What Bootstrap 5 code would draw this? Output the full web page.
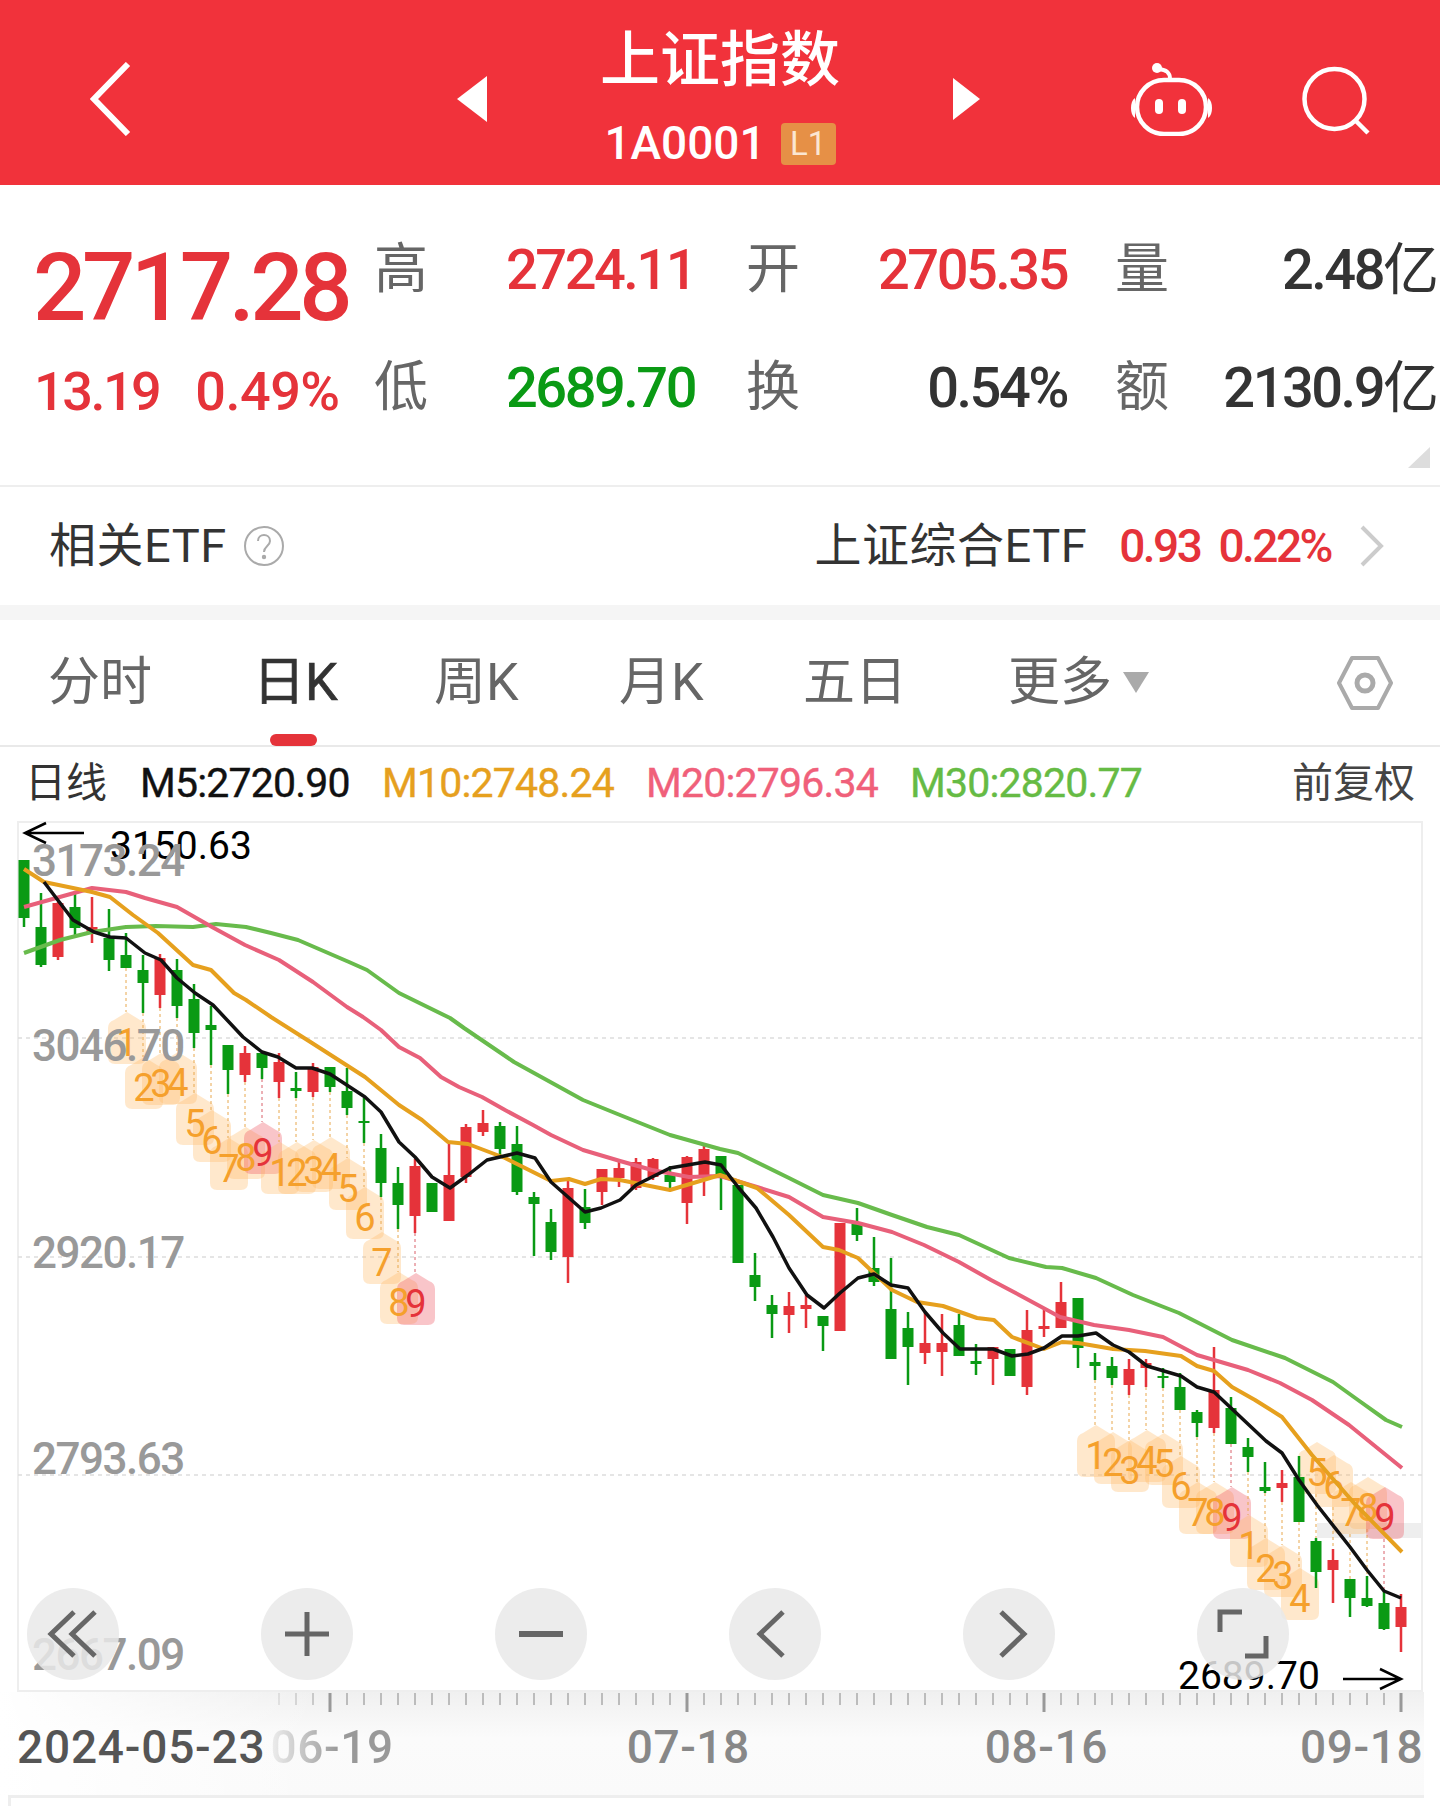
<!DOCTYPE html>
<html lang="zh-CN">
<head>
  <meta charset="UTF-8" />
  <title>上证指数</title>
  <meta name="viewport" content="width=device-width, initial-scale=1.0" />
  <link rel="stylesheet" href="https://cdn.jsdelivr.net/npm/bootstrap@5.3.0/dist/css/bootstrap.min.css" />
  <style>
    body {
      width: 1440px;
      height: 1806px;
      overflow: hidden;
      background: #fff;
      font-family: Roboto, "Noto Sans CJK SC", sans-serif;
    }

    /* top bar */
    .top-bar {
      height: 185px;
      padding: 12px 0 0 90px;
      background: #f1323b;
      color: #fff;
    }
    .top-center { width: 466px; }
    .top-title { font-size: 60px; line-height: 60px; font-weight: 500; }
    .top-code { margin-top: 30px; font-size: 46px; line-height: 45px; font-weight: 500; }
    .level-tag {
      width: 55px;
      height: 42px;
      margin-left: 15px;
      border-radius: 4px;
      background: #e69046;
      color: #fbe6d2;
      font-size: 33px;
      font-weight: 400;
      line-height: 42px;
      text-align: center;
    }

    /* quote block */
    .quote-grid {
      display: grid;
      grid-template-columns: 374px 54px 268px 50px 54px 267px 48px 56px 268px;
      grid-template-rows: 80px 80px;
      row-gap: 38px;
      align-items: center;
      height: 302px;
      padding-top: 45px;
      border-bottom: 2px solid #eee;
    }
    .quote-price {
      padding-left: 33px;
      margin-top: 36px;
      color: #e5333a;
      font-size: 94px;
      line-height: 80px;
      font-weight: 500;
      letter-spacing: -4.5px;
    }
    .quote-change {
      display: flex;
      padding-left: 34px;
      margin-top: 6px;
      color: #e5333a;
      font-size: 54px;
      font-weight: 500;
      letter-spacing: -2.5px;
    }
    .quote-change span + span { margin-left: 36px; letter-spacing: -.5px; }
    .quote-label { color: #666; font-size: 54px; line-height: 60px; }
    .quote-value { font-size: 56px; line-height: 60px; font-weight: 500; letter-spacing: -2.5px; white-space: nowrap; }
    .val-indent { padding-left: 78px; }
    .val-red { color: #e5333a; }
    .val-green { color: #0a9a14; }
    .val-dark { color: #333; }
    .val-unit { letter-spacing: 0; font-weight: 400; }
    .corner-mark {
      right: 10px;
      bottom: 17px;
      width: 22px;
      height: 21px;
      background: #ddd;
      clip-path: polygon(100% 0, 100% 100%, 0 100%);
    }

    /* etf row */
    .etf-row { height: 133px; padding: 0 56px 0 49px; border-bottom: 15px solid #f5f5f5; }
    .etf-name { color: #333; font-size: 47px; letter-spacing: .5px; }
    .etf-num { color: #e5333a; font-size: 46px; font-weight: 500; letter-spacing: -2.5px; margin-left: 32px; }
    .etf-num + .etf-num { margin-left: 18px; }
    .etf-arrow { margin-left: 28px; }

    /* period tabs */
    .tab-row { height: 127px; padding: 0 47px 0 48px; border-bottom: 2px solid #e9e9e9; }
    .tab-cell { color: #666; font-size: 52px; line-height: 60px; white-space: nowrap; }
    .tab-on { color: #333; -webkit-text-stroke: .7px #333; }
    .tab-pill {
      left: 17px;
      bottom: -33px;
      width: 47px;
      height: 12px;
      border-radius: 6px;
      background: #e5333a;
    }
    .tab-caret {
      width: 26px;
      height: 21px;
      margin-left: 11px;
      background: #aaa;
      clip-path: polygon(0 0, 100% 0, 50% 100%);
    }

    /* moving average row */
    .ma-row { height: 74px; padding: 0 25px; font-size: 41px; letter-spacing: -.8px; white-space: nowrap; }
    .ma-label { width: 115px; color: #333; font-size: 41px; letter-spacing: 0; }
    .ma-cell { width: 242px; -webkit-text-stroke: .4px; }
    .ma5 { color: #111; }
    .ma10 { color: #e6a01e; width: 264px; }
    .ma20 { color: #f0607a; width: 264px; }
    .ma30 { color: #66bb44; }
    .ma-adjust { color: #444; letter-spacing: 0; }

    /* chart */
    .chart-box { height: 871px; }
    .chart-box svg { display: block; }
    .y-label { fill: #999; font-size: 44px; font-weight: 500; letter-spacing: -1.5px; }
    .ext-label { fill: #000; font-size: 39px; }
    .td-digit { font-size: 38px; }
    .tool-row { left: 27px; bottom: 12px; gap: 142px; }
    .tool-btn {
      width: 92px;
      height: 92px;
      padding: 0;
      border: 0;
      border-radius: 50%;
      background: rgba(233, 233, 233, .85);
    }
    .tool-btn svg { margin: auto; fill: none; stroke: #666; stroke-width: 5; }

    /* time axis */
    .axis-row {
      width: 1424px;
      height: 103px;
      background: linear-gradient(90deg, #fff 0, rgba(255, 255, 255, 0) 320px), linear-gradient(#f0f0f0, #fbfbfb 45%, #fafafa);
    }
    .axis-row svg { position: absolute; top: 0; left: 0; }
    .axis-dates { padding: 33px 0 0 17px; color: #888; font-size: 46px; line-height: 44px; font-weight: 500; letter-spacing: .6px; white-space: nowrap; }
    .date-first { color: #555; letter-spacing: .8px; }
    .date-fade {
      margin-left: 5px;
      margin-right: 233px;
      background: linear-gradient(90deg, #eee 0, #999 55%);
      -webkit-background-clip: text;
      background-clip: text;
      color: transparent;
    }
    .date-mid { margin-right: 235px; }
    .date-near { margin-right: 192px; }
    .axis-foot { width: 1416px; height: 11px; margin-left: 8px; border-top: 3px solid #eee; border-left: 3px solid #eee; }
  </style>
</head>
<body>

  <!-- top bar -->
  <header class="top-bar d-flex align-items-center">
    <svg width="41" height="74" viewBox="0 0 41 74" fill="none" stroke="#fff" stroke-width="6"><path d="M38 2 L4 37 L38 72" /></svg>
    <svg style="margin-left:326px" width="30" height="46" viewBox="0 0 30 46" fill="#fff"><path d="M30 0 V46 L0 23 Z" /></svg>
    <div class="top-center d-flex flex-column align-items-center">
      <div class="top-title">上证指数</div>
      <div class="top-code d-flex align-items-center">1A0001<span class="level-tag">L1</span></div>
    </div>
    <svg width="27" height="42" viewBox="0 0 27 42" fill="#fff"><path d="M0 0 V42 L27 21 Z" /></svg>
    <svg style="margin-left:151px" width="81" height="74" viewBox="0 0 81 74" fill="none" stroke="#fff" stroke-width="4.5">
      <rect x="6" y="18" width="69" height="54" rx="27" />
      <path d="M39 17 C39 10 35 8 28 7" stroke-width="4" />
      <circle cx="26" cy="6" r="5" fill="#fff" stroke="none" />
      <path d="M4 36 C1 38 0 42 0 46 C0 50 1 54 4 56 Z M77 36 C80 38 81 42 81 46 C81 50 80 54 77 56 Z" fill="#fff" stroke="none" />
      <rect x="24" y="37" width="8" height="15" rx="4" fill="#fff" stroke="none" />
      <rect x="47" y="37" width="8" height="15" rx="4" fill="#fff" stroke="none" />
    </svg>
    <svg style="margin-left:90px" width="70" height="72" viewBox="0 0 70 72" fill="none" stroke="#fff" stroke-width="4.5">
      <circle cx="32.5" cy="36" r="30" />
      <path d="M54 58 L66 70" />
    </svg>
  </header>

  <!-- quote -->
  <section class="quote-grid position-relative">
    <div class="quote-price">2717.28</div>
    <div class="quote-label">高</div>
    <div class="quote-value val-indent val-red">2724.11</div>
    <div></div>
    <div class="quote-label">开</div>
    <div class="quote-value text-end val-red">2705.35</div>
    <div></div>
    <div class="quote-label">量</div>
    <div class="quote-value text-end val-dark">2.48<span class="val-unit">亿</span></div>

    <div class="quote-change"><span>13.19</span><span>0.49%</span></div>
    <div class="quote-label">低</div>
    <div class="quote-value val-indent val-green">2689.70</div>
    <div></div>
    <div class="quote-label">换</div>
    <div class="quote-value text-end val-dark">0.54%</div>
    <div></div>
    <div class="quote-label">额</div>
    <div class="quote-value text-end val-dark">2130.9<span class="val-unit">亿</span></div>
    <span class="corner-mark position-absolute"></span>
  </section>

  <!-- etf -->
  <section class="etf-row d-flex align-items-center">
    <span class="etf-name">相关ETF</span>
    <svg class="ms-3" width="42" height="42" viewBox="0 0 42 42" fill="none" stroke="#aaa" stroke-width="2">
      <circle cx="21" cy="21" r="19" />
      <path d="M15 16 C15 8 27 8 27 16 C27 21 21 21 21 27" />
      <circle cx="21" cy="32" r="1.2" fill="#aaa" />
    </svg>
    <span class="etf-name ms-auto">上证综合ETF</span>
    <span class="etf-num">0.93</span>
    <span class="etf-num">0.22%</span>
    <svg class="etf-arrow" width="25" height="42" viewBox="0 0 25 42" fill="none" stroke="#ccc" stroke-width="4"><path d="M3 2 L22 21 L3 40" /></svg>
  </section>

  <!-- periods -->
  <nav class="tab-row d-flex align-items-center">
    <div class="tab-cell" style="width:205px">分时</div>
    <div class="tab-cell tab-on position-relative" style="width:181px">日K<span class="tab-pill position-absolute"></span></div>
    <div class="tab-cell" style="width:185px">周K</div>
    <div class="tab-cell" style="width:184px">月K</div>
    <div class="tab-cell" style="width:205px">五日</div>
    <div class="tab-cell d-flex align-items-center">更多<span class="tab-caret"></span></div>
    <svg class="ms-auto" width="56" height="54" viewBox="0 0 56 54" fill="none" stroke="#aaa">
      <path d="M15 2 H41 L54 27 L41 52 H15 L2 27 Z" stroke-width="4" stroke-linejoin="round" />
      <circle cx="28" cy="27" r="8" stroke-width="5" />
    </svg>
  </nav>

  <!-- moving averages -->
  <div class="ma-row d-flex align-items-center">
    <span class="ma-label">日线</span>
    <span class="ma-cell ma5">M5:2720.90</span>
    <span class="ma-cell ma10">M10:2748.24</span>
    <span class="ma-cell ma20">M20:2796.34</span>
    <span class="ma-cell ma30">M30:2820.77</span>
    <span class="ma-adjust ms-auto">前复权</span>
  </div>

  <!-- chart -->
  <div class="chart-box position-relative">
    <svg id="klineChart" width="1440" height="871" viewBox="0 821 1440 871"></svg>
    <div class="tool-row position-absolute d-flex">
      <button class="tool-btn d-flex" type="button"><svg width="92" height="92" viewBox="0 0 92 92"><path d="M47 24 L24 46 L47 68 M68 24 L45 46 L68 68" /></svg></button>
      <button class="tool-btn d-flex" type="button"><svg width="92" height="92" viewBox="0 0 92 92"><path d="M24 46 H68 M46 24 V68" /></svg></button>
      <button class="tool-btn d-flex" type="button"><svg width="92" height="92" viewBox="0 0 92 92"><path d="M24 46 H68" stroke-width="6" /></svg></button>
      <button class="tool-btn d-flex" type="button"><svg width="92" height="92" viewBox="0 0 92 92"><path d="M54 24 L31 46 L54 68" /></svg></button>
      <button class="tool-btn d-flex" type="button"><svg width="92" height="92" viewBox="0 0 92 92"><path d="M38 24 L61 46 L38 68" /></svg></button>
      <button class="tool-btn d-flex" type="button"><svg width="92" height="92" viewBox="0 0 92 92"><path d="M23 44 V24 H45 M69 48 V68 H48" /></svg></button>
    </div>
  </div>

  <!-- time axis -->
  <div class="axis-row position-relative">
    <svg id="axisTicks" width="1424" height="30"></svg>
    <div class="axis-dates d-flex">
      <span class="date-first">2024-05-23</span>
      <span class="date-fade">06-19</span>
      <span class="date-mid">07-18</span>
      <span class="date-near">08-16</span>
      <span>09-18</span>
    </div>
  </div>
  <div class="axis-foot"></div>

  <script src="https://cdn.jsdelivr.net/npm/bootstrap@5.3.0/dist/js/bootstrap.bundle.min.js"></script>
  <script>
    const RED = "#e5333a", GREEN = "#0a9a14";

    // [color, bodyTop, bodyBottom, wickTop, wickBottom], one per trading day, y in page pixels
    const candles = [
      "g 860 918 860 927", "g 927 965 893 967", "r 903 957 902 960", "g 907 928 894 935", "r 927 933 897 943",
      "g 938 960 909 971", "g 955 968 933 968", "g 970 983 955 1013", "r 958 995 954 1008", "g 970 1006 959 1018",
      "g 999 1033 984 1048", "g 1025 1030 1006 1065", "g 1045 1070 1045 1094", "r 1053 1075 1046 1082", "g 1053 1068 1053 1079",
      "r 1062 1082 1053 1098", "g 1088 1091 1072 1098", "r 1067 1092 1063 1097", "g 1067 1087 1067 1092", "g 1091 1108 1068 1115",
      "g 1121 1123 1098 1143", "g 1148 1183 1134 1197", "g 1183 1205 1167 1229", "r 1166 1216 1159 1233", "g 1183 1212 1183 1212",
      "r 1175 1221 1143 1221", "r 1127 1177 1124 1183", "r 1123 1132 1110 1136", "g 1126 1149 1122 1157", "g 1144 1192 1126 1195",
      "g 1197 1204 1192 1256", "g 1222 1252 1209 1260", "r 1188 1257 1181 1283", "g 1207 1223 1189 1229", "r 1169 1192 1169 1205",
      "r 1168 1178 1159 1187", "r 1162 1188 1158 1190", "r 1159 1177 1158 1180", "g 1175 1182 1166 1188", "r 1157 1203 1156 1224",
      "r 1149 1175 1146 1196", "g 1156 1175 1156 1210", "g 1185 1263 1185 1263", "g 1275 1287 1253 1301", "g 1305 1314 1295 1338",
      "r 1306 1315 1292 1333", "r 1305 1309 1295 1328", "g 1316 1326 1316 1351", "r 1223 1331 1223 1331", "g 1224 1235 1208 1241",
      "g 1268 1282 1237 1286", "g 1309 1359 1258 1359", "g 1328 1347 1312 1385", "r 1343 1353 1312 1364", "r 1343 1352 1314 1376",
      "g 1325 1356 1314 1356", "g 1361 1364 1344 1375", "r 1347 1359 1347 1385", "g 1349 1376 1349 1376", "r 1330 1387 1310 1395",
      "r 1326 1329 1310 1337", "r 1302 1328 1282 1328", "g 1298 1348 1298 1368", "g 1362 1366 1353 1380", "g 1366 1378 1357 1385",
      "r 1369 1385 1359 1395", "r 1363 1368 1359 1387", "g 1376 1378 1368 1388", "g 1387 1410 1373 1410", "g 1412 1423 1410 1437",
      "r 1390 1428 1347 1433", "g 1408 1444 1397 1444", "g 1447 1457 1438 1472", "g 1487 1491 1462 1493", "r 1483 1488 1470 1502",
      "g 1477 1522 1456 1522", "g 1541 1572 1538 1588", "r 1560 1570 1549 1603", "g 1579 1598 1579 1617", "g 1598 1606 1576 1607",
      "g 1603 1629 1592 1630", "r 1607 1627 1594 1652"
    ];

    const maLines = [
      { color: "#68bb4c", width: 4, pts: "24,953 60,940 92,932 126,927 156,926 193,927 216,924 246,927 271,933 298,940 349,962 367,970 399,993 450,1018 464,1028 514,1062 583,1100 620,1115 670,1135 720,1149 738,1153 789,1178 823,1195 858,1203 892,1215 927,1227 959,1235 1009,1258 1046,1267 1062,1268 1096,1278 1133,1295 1179,1313 1232,1340 1285,1358 1333,1382 1358,1400 1386,1420 1402,1427" },
      { color: "#e8607a", width: 4, pts: "24,907 92,888 126,892 145,898 177,907 212,927 245,945 279,960 313,982 347,1007 363,1017 381,1030 399,1047 420,1058 441,1077 459,1087 482,1097 505,1110 533,1125 551,1135 583,1150 620,1161 652,1170 689,1177 720,1176 757,1187 789,1197 823,1217 858,1223 892,1232 924,1245 959,1262 991,1280 1023,1297 1060,1317 1094,1325 1129,1330 1163,1337 1197,1355 1248,1370 1280,1383 1312,1400 1349,1425 1402,1468" },
      { color: "#e6a01e", width: 4, pts: "24,869 44,882 73,888 92,892 110,897 133,915 158,933 193,965 211,970 234,993 246,1000 271,1017 312,1043 365,1077 399,1105 422,1120 448,1142 468,1144 505,1158 551,1181 569,1179 585,1184 601,1179 620,1180 670,1190 720,1175 757,1188 789,1215 823,1247 839,1250 858,1258 876,1275 892,1290 917,1302 943,1306 977,1318 994,1320 1012,1337 1044,1349 1062,1342 1078,1343 1113,1349 1145,1351 1181,1356 1197,1366 1214,1371 1232,1387 1255,1400 1282,1417 1312,1455 1354,1503 1402,1552" },
      { color: "#111", width: 3.5, pts: "44,882 73,920 94,932 110,937 126,938 145,953 161,960 177,978 195,993 213,1005 243,1037 262,1052 278,1057 296,1068 312,1068 330,1074 365,1097 381,1112 399,1142 415,1157 432,1177 450,1188 468,1175 487,1160 517,1153 535,1158 551,1182 585,1212 601,1208 620,1200 636,1185 670,1168 705,1162 721,1165 738,1187 756,1208 773,1237 789,1268 807,1295 824,1308 840,1293 858,1278 874,1274 891,1285 908,1288 925,1312 943,1333 960,1349 993,1349 1012,1356 1028,1354 1044,1348 1062,1336 1078,1336 1096,1333 1113,1345 1129,1352 1147,1366 1181,1376 1197,1387 1214,1392 1266,1441 1282,1453 1299,1480 1317,1505 1350,1547 1367,1570 1384,1591 1401,1598" }
    ];

    // [candle index, digit centre y, digit] of the nine-turn markers
    const turnMarks = [
      [6, 1042, 1], [7, 1087, 2], [8, 1083, 3], [9, 1082, 4], [10, 1123, 5], [11, 1140, 6], [12, 1168, 7], [13, 1157, 8], [14, 1152, 9],
      [15, 1172, 1], [16, 1172, 2], [17, 1170, 3], [18, 1167, 4], [19, 1188, 5], [20, 1217, 6], [21, 1262, 7], [22, 1302, 8], [23, 1303, 9],
      [63, 1455, 1], [64, 1462, 2], [65, 1470, 3], [66, 1460, 4], [67, 1463, 5], [68, 1486, 6], [69, 1512, 7], [70, 1512, 8], [71, 1517, 9],
      [72, 1545, 1], [73, 1568, 2], [74, 1575, 3], [75, 1598, 4], [76, 1472, 5], [77, 1485, 6], [78, 1512, 7], [79, 1507, 8], [80, 1517, 9]
    ];

    const xOf = (i) => 24 + 17 * i;
    let svg = `<rect x="18" y="822" width="1404" height="869" fill="none" stroke="#eee" stroke-width="2" />`;

    // horizontal grid
    [1038, 1257, 1475].forEach((y) => {
      svg += `<line x1="18" x2="1422" y1="${y}" y2="${y}" stroke="#ddd" stroke-width="1.5" stroke-dasharray="4 4" />`;
    });

    // crosshair band behind the last markers
    svg += `<rect x="1317" y="1523" width="106" height="15" fill="#eee" />`;

    // marker boxes and their dashed leads
    turnMarks.forEach(([i, cy, digit]) => {
      const x = xOf(i) + 1;
      const isTop = digit === 9;
      const box = isTop ? "rgba(238,80,90,.33)" : "rgba(255,186,100,.33)";
      const wick = candles[i].split(" ").map(Number);
      const lead = isTop ? "#d9606a" : "#e8a84e";
      const [y1, y2] = cy > wick[4] ? [wick[4], cy - 30] : [cy + 22, wick[3]];
      svg += `<line x1="${x - 1}" x2="${x - 1}" y1="${y1}" y2="${y2}" stroke="${lead}" stroke-width="1" stroke-dasharray="3 3" />`;
      svg += `<path d="M${x} ${cy - 30} L${x + 13} ${cy - 22} Q${x + 19} ${cy - 20} ${x + 19} ${cy - 14} V${cy + 15} Q${x + 19} ${cy + 22} ${x + 12} ${cy + 22} H${x - 12} Q${x - 19} ${cy + 22} ${x - 19} ${cy + 15} V${cy - 14} Q${x - 19} ${cy - 20} ${x - 13} ${cy - 22} Z" fill="${box}" />`;
    });
    turnMarks.forEach(([i, cy, digit]) => {
      svg += `<text class="td-digit" x="${xOf(i) + 1}" y="${cy + 14}" text-anchor="middle" fill="${digit === 9 ? "#e5333a" : "#f5a02c"}">${digit}</text>`;
    });

    // candles
    candles.forEach((row, i) => {
      const [c, top, bottom, high, low] = row.split(" ");
      const color = c === "r" ? RED : GREEN;
      const x = xOf(i);
      svg += `<rect x="${x - 1.25}" y="${high}" width="2.5" height="${low - high}" fill="${color}" />`;
      svg += `<rect x="${x - 5.5}" y="${top}" width="11" height="${bottom - top}" fill="${color}" />`;
    });

    // moving averages
    maLines.forEach((line) => {
      svg += `<polyline points="${line.pts}" fill="none" stroke="${line.color}" stroke-width="${line.width}" stroke-linejoin="round" />`;
    });

    // period high and low notes
    svg += `<path d="M84 833 H25 M46 823 L25 833 L46 843" fill="none" stroke="#000" stroke-width="2.5" />`;
    svg += `<text class="ext-label" x="110" y="859">3150.63</text>`;
    svg += `<path d="M1343 1679 H1401 M1380 1669 L1401 1679 L1380 1689" fill="none" stroke="#000" stroke-width="2.5" />`;
    svg += `<text class="ext-label" x="1178" y="1689">2689.70</text>`;

    // y axis
    [["3173.24", 876], ["3046.70", 1061], ["2920.17", 1268], ["2793.63", 1474], ["2667.09", 1670]].forEach(([text, y]) => {
      svg += `<text class="y-label" x="32" y="${y}">${text}</text>`;
    });
    document.getElementById("klineChart").innerHTML = svg;

    // ticks under the chart, the first ones fade out
    let ticks = "";
    for (let i = 15; i <= 81; i++) {
      const major = (i - 18) % 21 === 0;
      const fade = i < 18 ? 0.35 + (i - 15) * 0.2 : 1;
      ticks += `<rect x="${xOf(i) - (major ? 1.5 : 0.75)}" y="1" width="${major ? 3 : 1.5}" height="${major ? 19 : 12}" fill="${major ? "#999" : "#aaa"}" opacity="${fade}" />`;
    }
    document.getElementById("axisTicks").innerHTML = ticks;
  </script>
</body>
</html>
